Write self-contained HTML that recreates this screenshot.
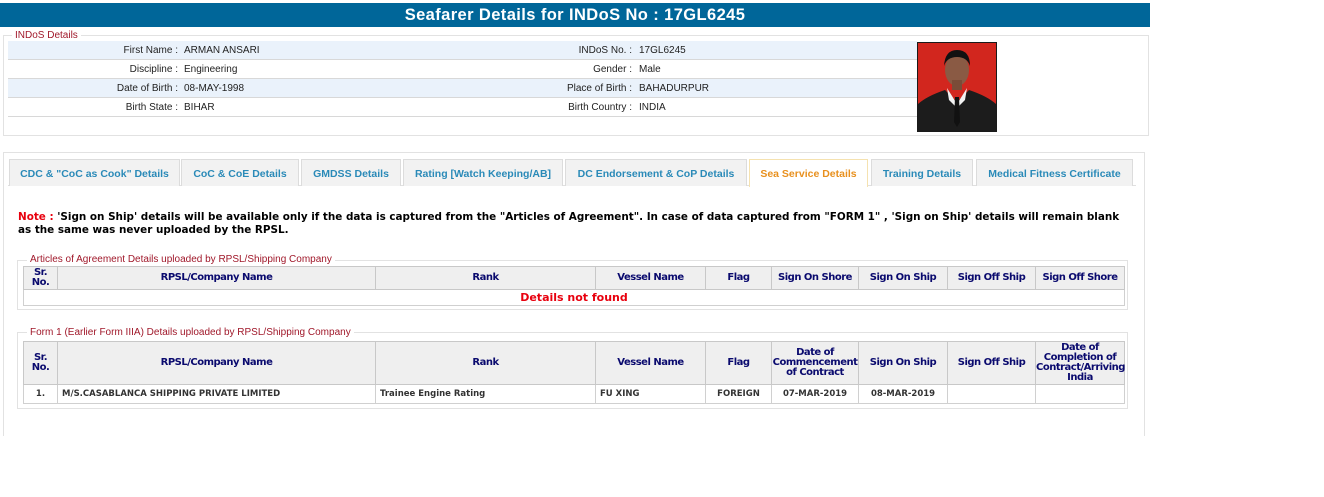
<!DOCTYPE html>
<html><head><meta charset="utf-8"><style>
*{margin:0;padding:0;box-sizing:border-box}
body{width:1324px;height:497px;background:#fff;font-family:"Liberation Sans",Arial,sans-serif;position:relative;overflow:hidden}
.abs{position:absolute}
.hdr{left:0;top:3px;width:1150px;height:24px;background:#006699;color:#fff;font-weight:bold;font-size:16.5px;text-align:center;line-height:25px;letter-spacing:0.4px}
.fs{border:1px solid #e2e2e2}
.lg{position:absolute;background:#fff;color:#a0182a;font-size:10px;padding:0 3px;line-height:11px}
.row{position:absolute;left:8px;width:909px;height:19px;border-bottom:1px solid #d8d8d8;font-size:10px;color:#222;line-height:19px}
.row.b{background:#eaf2fb}
.row span{position:absolute;white-space:nowrap}
.l1{right:739px}.v1{left:176px}.l2{right:285px}.v2{left:631px}
.tab{position:absolute;top:159px;height:27px;background:#f2f2f2;border:1px solid #dcdcdc;border-bottom:none;color:#2a8ab8;font-weight:bold;font-size:10.5px;text-align:center;line-height:28px;white-space:nowrap}
.tab.on{background:#fff;color:#e8901e;border-color:#f5e2b0}
.note{left:18px;top:211px;font-family:"DejaVu Sans",Verdana,sans-serif;font-weight:bold;font-size:10.4px;line-height:13px;width:1108px;color:#000}
table{position:absolute;border-collapse:collapse;border:1px solid #aaa;font-weight:bold;font-size:10px;color:#0a0a6e;font-family:"DejaVu Sans",Tahoma,sans-serif;table-layout:fixed}
th{background:#efefef;border:1px solid #c8c8c8;font-size:10px;line-height:10px;font-weight:bold;letter-spacing:-0.5px}
td{border:1px solid #d0d0d0;font-size:8.5px;color:#333;text-align:center}
</style></head><body>
<div class="abs hdr">Seafarer Details for INDoS No : 17GL6245</div>

<div class="abs fs" style="left:3px;top:35px;width:1146px;height:101px"></div>
<div class="lg" style="left:12px;top:30px">INDoS Details</div>
<div class="row b" style="top:41px"><span class="l1">First Name :</span><span class="v1">ARMAN ANSARI</span><span class="l2">INDoS No. :</span><span class="v2">17GL6245</span></div>
<div class="row" style="top:60px"><span class="l1">Discipline :</span><span class="v1">Engineering</span><span class="l2">Gender :</span><span class="v2">Male</span></div>
<div class="row b" style="top:79px"><span class="l1">Date of Birth :</span><span class="v1">08-MAY-1998</span><span class="l2">Place of Birth :</span><span class="v2">BAHADURPUR</span></div>
<div class="row" style="top:98px"><span class="l1">Birth State :</span><span class="v1">BIHAR</span><span class="l2">Birth Country :</span><span class="v2">INDIA</span></div>

<svg class="abs" style="left:917px;top:42px" width="80" height="90" viewBox="0 0 80 90">
<rect width="80" height="90" fill="#1a1a1a"/>
<rect x="1" y="1" width="78" height="88" fill="#d2261e"/>
<path d="M1 89 L1 62 Q10 54 28 48 L40 60 L52 48 Q70 54 79 62 L79 89Z" fill="#1c1c1c"/>
<path d="M30 46 L40 62 L50 46 L48 58 L40 66 L32 58Z" fill="#f2f2f2"/>
<path d="M38 55 L42 55 L43 80 L40 85 L37 80Z" fill="#111"/>
<ellipse cx="40" cy="28" rx="12" ry="16" fill="#8a5a44"/>
<rect x="35" y="38" width="10" height="10" fill="#7a4c38"/>
<path d="M27 24 Q28 8 40 8 Q53 8 53 24 Q50 15 40 15 Q30 15 27 24Z" fill="#111"/>
</svg>

<div class="abs fs" style="left:3px;top:152px;width:1142px;height:284px;border-bottom:none"></div>
<div class="abs" style="left:8px;top:185px;width:1128px;border-top:1px solid #e0e0e0"></div>
<div class="tab" style="left:9px;width:171px">CDC &amp; "CoC as Cook" Details</div>
<div class="tab" style="left:181px;width:118px">CoC &amp; CoE Details</div>
<div class="tab" style="left:301px;width:100px">GMDSS Details</div>
<div class="tab" style="left:403px;width:160px">Rating [Watch Keeping/AB]</div>
<div class="tab" style="left:565px;width:182px">DC Endorsement &amp; CoP Details</div>
<div class="tab on" style="left:749px;width:119px;height:28px">Sea Service Details</div>
<div class="tab" style="left:871px;width:102px">Training Details</div>
<div class="tab" style="left:976px;width:157px">Medical Fitness Certificate</div>

<div class="abs note"><span style="color:#e8000e">Note :</span> 'Sign on Ship' details will be available only if the data is captured from the "Articles of Agreement". In case of data captured from "FORM 1" , 'Sign on Ship' details will remain blank as the same was never uploaded by the RPSL.</div>

<div class="abs fs" style="left:17px;top:260px;width:1111px;height:50px"></div>
<div class="lg" style="left:27px;top:254px">Articles of Agreement Details uploaded by RPSL/Shipping Company</div>
<table style="left:23px;top:266px;width:1102px">
<tr style="height:23px"><th style="width:34px">Sr.<br>No.</th><th style="width:318px">RPSL/Company Name</th><th style="width:220px">Rank</th><th style="width:110px">Vessel Name</th><th style="width:66px">Flag</th><th style="width:87px">Sign On Shore</th><th style="width:89px">Sign On Ship</th><th style="width:88px">Sign Off Ship</th><th>Sign Off Shore</th></tr>
<tr style="height:16px"><td colspan="9" style="color:#e8000e;font-size:11px;font-weight:bold">Details not found</td></tr>
</table>

<div class="abs fs" style="left:17px;top:332px;width:1111px;height:77px"></div>
<div class="lg" style="left:27px;top:327px">Form 1 (Earlier Form IIIA) Details uploaded by RPSL/Shipping Company</div>
<table style="left:23px;top:341px;width:1102px">
<tr style="height:43px"><th style="width:34px">Sr.<br>No.</th><th style="width:318px">RPSL/Company Name</th><th style="width:220px">Rank</th><th style="width:110px">Vessel Name</th><th style="width:66px">Flag</th><th style="width:87px">Date of<br>Commencement<br>of Contract</th><th style="width:89px">Sign On Ship</th><th style="width:88px">Sign Off Ship</th><th>Date of<br>Completion of<br>Contract/Arriving<br>India</th></tr>
<tr style="height:19px"><td>1.</td><td style="text-align:left;padding-left:4px">M/S.CASABLANCA SHIPPING PRIVATE LIMITED</td><td style="text-align:left;padding-left:4px">Trainee Engine Rating</td><td style="text-align:left;padding-left:4px">FU XING</td><td>FOREIGN</td><td>07-MAR-2019</td><td>08-MAR-2019</td><td></td><td></td></tr>
</table>
</body></html>
